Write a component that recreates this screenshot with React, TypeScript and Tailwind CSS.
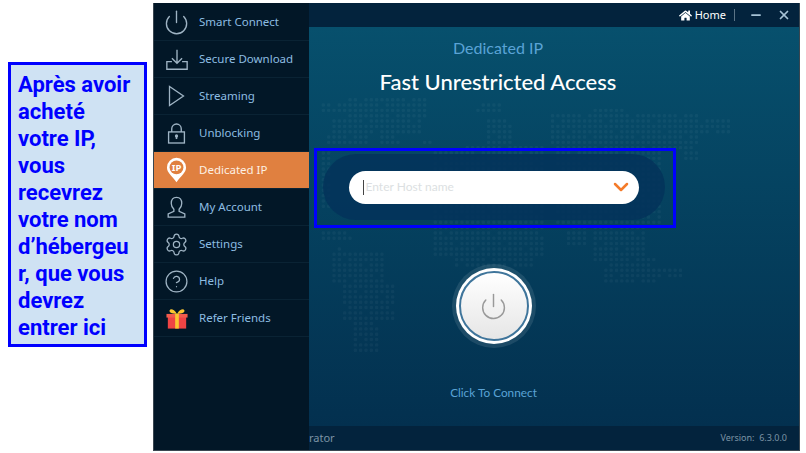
import { ReactNode } from "react";
import { Minus, Power, X, ChevronDown, Settings, CircleHelp } from "lucide-react";
import { FaHome } from "react-icons/fa";

// land masses of the dotted map, page coords [x0, y0, x1, y1]
const land = [
  [320, 103, 360, 112],
  [345, 98, 425, 117],
  [330, 117, 420, 132],
  [322, 132, 365, 143],
  [375, 132, 400, 143],
  [420, 138, 432, 143],
  [317, 150, 332, 208],
  [317, 228, 352, 240],
  [328, 245, 338, 252],
  [332, 250, 385, 282],
  [342, 282, 392, 320],
  [350, 320, 378, 350],
  [473, 103, 500, 112],
  [482, 118, 510, 143],
  [462, 143, 545, 150],
  [433, 150, 545, 257],
  [450, 257, 530, 268],
  [590, 105, 622, 112],
  [550, 110, 700, 147],
  [610, 118, 728, 135],
  [700, 125, 730, 135],
  [683, 147, 698, 160],
  [555, 150, 660, 225],
  [563, 223, 583, 247],
  [593, 223, 643, 263],
  [600, 253, 655, 280],
  [650, 265, 682, 278],
];

function DotMap() {
  const dots: { x: number; y: number }[] = [];
  for (let row = 0; row < 48; row++) {
    for (let col = 0; col < 92; col++) {
      const x = 311 + col * 5.33;
      const y = 98 + row * 5.33;
      const keep = (col * 7 + row * 13 + col * row) % 9 !== 0;
      if (keep && land.some(([x0, y0, x1, y1]) => x >= x0 && x <= x1 && y >= y0 && y <= y1)) {
        dots.push({ x: x - 309, y: y - 27 });
      }
    }
  }
  return (
    <svg className="absolute left-0 top-0 h-[400px] w-[491px]" viewBox="0 0 491 400">
      {dots.map((d, i) => (
        <rect key={i} x={d.x} y={d.y} width="3.4" height="3.4" rx="1.2" fill="#ffffff" fillOpacity="0.04" />
      ))}
    </svg>
  );
}

const line = "#9fb4c4";

function DedicatedIcon() {
  return (
    <svg width="21" height="26" viewBox="0 0 24 30">
      <path d="M12 1a11 11 0 0 1 11 11c0 6-6 10-11 17C7 22 1 18 1 12A11 11 0 0 1 12 1z" fill="#fff" />
      <circle cx="12" cy="12" r="8" fill="#e08040" />
      <text x="12" y="16" textAnchor="middle" fontSize="11" fontWeight="700" fill="#fff" fontFamily="Noto Sans, sans-serif">IP</text>
    </svg>
  );
}

function DownloadIcon() {
  return (
    <svg width="22" height="23" viewBox="0 0 26 27" fill="none" stroke={line} strokeWidth="1.6">
      <path d="M7 16H1v9h24v-9h-6" />
      <path d="M13 2v16M7 12l6 6 6-6" />
    </svg>
  );
}

function PlayIcon() {
  return (
    <svg width="17" height="22" viewBox="0 0 17 22" fill="none" stroke={line} strokeWidth="1.3">
      <path d="M1.5 1.500v19L15.500 11z" />
    </svg>
  );
}

function LockIcon() {
  return (
    <svg width="19" height="21" viewBox="0 0 24 26" fill="none" stroke={line} strokeWidth="1.7">
      <path d="M6 11V7a6 6 0 0 1 12 0v4" />
      <rect x="2" y="11" width="20" height="14" />
      <path d="M12 16v4" strokeWidth="2" />
      <circle cx="12" cy="16" r="1.2" fill={line} />
    </svg>
  );
}

function AccountIcon() {
  return (
    <svg width="21" height="22" viewBox="0 0 24 25" fill="none" stroke={line} strokeWidth="1.5">
      <path d="M12 1.500c-4 0-6 3-6 7 0 3 1.500 5 3 6.500v2.500l-6.500 3v3.500h19V20.500l-6.500-3V15c1.500-1.500 3-3.500 3-6.500 0-4-2-7-6-7z" />
    </svg>
  );
}

function GiftIcon() {
  return (
    <svg width="22" height="21" viewBox="0 0 24 22">
      <rect x="2" y="9" width="20" height="13" fill="#ef4444" />
      <rect x="0.5" y="6" width="23" height="4" fill="#f25c4d" />
      <rect x="10" y="6" width="4" height="16" fill="#fbc531" />
      <path d="M12 6C9 1 5 0 4 2s2 4 8 4zM12 6c3-5 7-6 8-4s-2 4-8 4z" fill="#fbc531" />
    </svg>
  );
}

const menu: { label: string; icon: ReactNode; active?: boolean }[] = [
  { label: "Smart Connect", icon: <Power size={27} strokeWidth={1.2} color={line} /> },
  { label: "Secure Download", icon: <DownloadIcon /> },
  { label: "Streaming", icon: <PlayIcon /> },
  { label: "Unblocking", icon: <LockIcon /> },
  { label: "Dedicated IP", icon: <DedicatedIcon />, active: true },
  { label: "My Account", icon: <AccountIcon /> },
  { label: "Settings", icon: <Settings size={25} strokeWidth={1.2} color={line} /> },
  { label: "Help", icon: <CircleHelp size={25} strokeWidth={1.2} color={line} /> },
  { label: "Refer Friends", icon: <GiftIcon /> },
];

export default function App() {
  return (
    <div className="relative flex h-[453px] w-[806px] overflow-hidden bg-white font-['Noto_Sans',sans-serif]">
      {/* Callout */}
      <div className="ml-2 mt-[62px] h-[285px] w-[139px] shrink-0 break-words border-[3px] border-[#0000ff] bg-[#cfe2f3] pl-[7px] pr-[9px] pt-[6px] font-['Roboto',sans-serif] text-[22px] font-bold leading-[27px] text-[#0000ff]">
        Après avoir acheté votre IP, vous recevrez votre nom d’hébergeur, que vous devrez entrer ici
      </div>

      {/* App window */}
      <div className="ml-[6px] mt-[3px] flex h-[448px] w-[647px] shrink-0 border-b border-l border-r border-[#3a4650] bg-[#011627]">
        <div className="flex w-[155px] shrink-0 flex-col bg-[#021727] pt-px">
          {menu.map((m) => (
            <div
              key={m.label}
              className={`flex h-[37px] items-center border-b border-[#0a2334] ${m.active ? "bg-[#e08040] text-[#fdf0e4]" : "text-[#8dbde2]"}`}
            >
              <div className="flex w-[45px] shrink-0 justify-center">{m.icon}</div>
              <span className="text-[11.5px]">{m.label}</span>
            </div>
          ))}
        </div>

        <div className="flex min-w-0 flex-1 flex-col">
          <div className="flex h-[24px] shrink-0 items-center justify-end bg-[#03233d] text-[11px] text-white">
            <FaHome size={13} className="mr-[3px]" />
            <span>Home</span>
            <div className="ml-[8px] h-[12px] w-px bg-[#5b7486]" />
            <Minus size={14} strokeWidth={3} color="#a6c3d6" className="ml-[14px]" />
            <X size={14} strokeWidth={3} color="#a6c3d6" className="ml-[14px] mr-[8px]" />
          </div>

          <div className="relative flex flex-1 flex-col items-center overflow-hidden bg-gradient-to-b from-[#07506d] to-[#03304f] pr-[121px]">
            <DotMap />
            <p className="relative ml-[9px] mt-[9px] font-['Lato',sans-serif] text-[16px] text-[#5aa3d6]">Dedicated IP</p>
            <h1 className="relative ml-[9px] mt-[8px] font-['Lato',sans-serif] text-[22px] font-medium leading-[28px] text-white">
              Fast Unrestricted Access
            </h1>

            <div className="relative mt-[58px] flex h-[66px] w-[342px] items-center justify-center rounded-full bg-[#04335a]/85">
              <div className="flex h-[33px] w-[290px] items-center rounded-full bg-white pl-[14px] pr-[6px]">
                <div className="h-[15px] w-px bg-[#444]" />
                <span className="flex-1 pl-[2px] font-['Lato',sans-serif] text-[12px] text-[#dcdfe2]">Enter Host name</span>
                <ChevronDown size={24} strokeWidth={2.5} color="#f47b2a" />
              </div>
            </div>

            <div className="relative mt-[44px] flex h-[84px] w-[84px] items-center justify-center rounded-full bg-white/10">
              <div className="flex h-[76px] w-[76px] items-center justify-center rounded-full bg-white">
                <div className="flex h-[70px] w-[70px] items-center justify-center rounded-full border-2 border-[#3f759b] bg-gradient-to-b from-[#ffffff] to-[#e6e6e6]">
                  <Power size={29} strokeWidth={1.2} color="#999999" />
                </div>
              </div>
            </div>

            <p className="relative mt-[36px] font-['Lato',sans-serif] text-[11.8px] text-[#5aa3d6]">Click To Connect</p>
          </div>

          <div className="flex h-[24px] shrink-0 items-center justify-between bg-[#03233d] pr-[12px] text-[#7c93a5]">
            <span className="text-[11px]">rator</span>
            <span className="text-[9px]">Version:&nbsp; 6.3.0.0</span>
          </div>
        </div>
      </div>

      {/* Highlight around the host name field */}
      <div className="absolute left-[314px] top-[148px] h-[80px] w-[362px] border-[3px] border-[#0000ff]" />
    </div>
  );
}
